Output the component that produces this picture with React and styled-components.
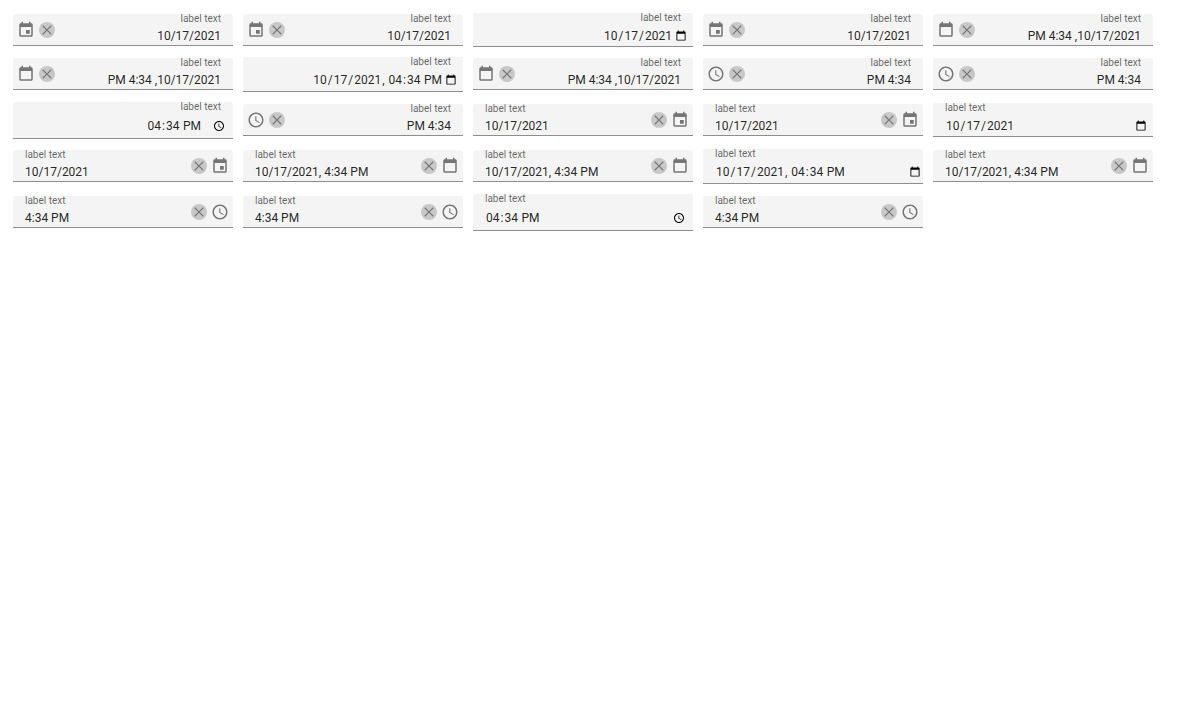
import React, { useId } from "react";
import styled, { createGlobalStyle, css } from "styled-components";

const GlobalStyle = createGlobalStyle`
  *, *::before, *::after { box-sizing: border-box; }
  body {
    margin: 0;
    background: #fff;
    color: rgba(0, 0, 0, 0.87);
    font-family: Roboto, "Liberation Sans", sans-serif;
  }
`;

const Page = styled.main`
  display: flex;
  flex-wrap: wrap;
  align-items: baseline;
  gap: 10px;
  padding: 13px;
`;

const Field = styled.div`
  position: relative;
  display: flex;
  width: 220px;
  overflow: hidden;
  background: #f4f4f4;
  border-bottom: 1px solid #8e8e8e;
  border-radius: 3px 3px 0 0;
`;

const Body = styled.div`
  flex: 1;
  align-self: baseline;
  min-width: 0;
  padding-top: 14px;
`;

/* Floats over the top of the field, so the fields in a row line up on their values. */
const Label = styled.label`
  position: absolute;
  top: 0;
  inset-inline-start: 12px;
  color: rgba(0, 0, 0, 0.6);
  font-size: 10px;
  line-height: 10px;
  white-space: nowrap;
`;

const inputText = css`
  display: block;
  width: 100%;
  height: 16px;
  border: 0;
  outline: 0;
  background: transparent;
  color: inherit;
  font-family: inherit;
  font-size: 12px;
  line-height: 16px;
`;

const TextInput = styled.input`
  ${inputText}
  margin: 0 0 1px;
  padding: 0;
  padding-inline-start: 12px;
`;

const nativeSpace = {
  date: css`
    margin: 1px 0 2px;
    padding: 0 6px 0 12px;
  `,
  "datetime-local": css`
    margin: 1px 0 3px;
    padding: 0 ${(p) => (p.$end ? 6 : 2)}px 0 12px;
  `,
  time: css`
    margin: 2px 0 4px;
    padding: 0 8px 0 12px;
  `,
};

const NativeInput = styled.input`
  ${inputText}
  direction: ltr;
  ${(p) => nativeSpace[p.type]}

  &::-webkit-datetime-edit {
    flex: 1;
    padding: 0;
    text-align: ${(p) => (p.$end ? "right" : "left")};
  }

  &::-webkit-datetime-edit-fields-wrapper {
    padding: 0;
  }

  &::-webkit-calendar-picker-indicator {
    flex: none;
    width: 12px;
    height: 12px;
    padding: 0;
    margin-inline-start: ${(p) => (p.type === "time" ? 11 : 2)}px;
  }
`;

const Actions = styled.div`
  display: flex;
  align-self: center;
  align-items: center;
  gap: 4px;
  padding: 0 4px;
`;

const IconButton = styled.button`
  display: flex;
  align-items: center;
  justify-content: center;
  width: ${(p) => p.$size}px;
  height: ${(p) => p.$size}px;
  padding: 0;
  border: 0;
  border-radius: ${(p) => (p.$filled ? "50%" : "0")};
  background: ${(p) => (p.$filled ? "#c8c8c8" : "transparent")};
  color: #757575;
  cursor: pointer;
`;

const paths = {
  date: "M17 12h-5v5h5v-5zM16 1v2H8V1H6v2H5c-1.11 0-1.99.9-1.99 2L3 19c0 1.1.89 2 2 2h14c1.1 0 2-.9 2-2V5c0-1.1-.9-2-2-2h-1V1h-2zm3 18H5V8h14v11z",
  "datetime-local":
    "M16 1v2H8V1H6v2H5c-1.11 0-1.99.9-1.99 2L3 19c0 1.1.89 2 2 2h14c1.1 0 2-.9 2-2V5c0-1.1-.9-2-2-2h-1V1h-2zm3 18H5V8h14v11z",
  time: "M11.99 2C6.47 2 2 6.48 2 12s4.47 10 9.99 10C17.52 22 22 17.52 22 12S17.52 2 11.99 2zM12 20c-4.42 0-8-3.58-8-8s3.58-8 8-8 8 3.58 8 8-3.58 8-8 8zm.5-13H11v6l5.25 3.15.75-1.23-4.5-2.67z",
  clear:
    "M19 6.2L17.8 5 12 10.8 6.2 5 5 6.2 10.8 12 5 17.8 6.2 19 12 13.2 17.8 19 19 17.8 13.2 12z",
};

function Icon({ name, size }) {
  return (
    <svg width={size} height={size} viewBox="0 0 24 24" fill="currentColor" aria-hidden="true">
      <path d={paths[name]} />
    </svg>
  );
}

const displayValues = {
  date: "10/17/2021",
  "datetime-local": "10/17/2021, 4:34 PM",
  time: "4:34 PM",
};

const nativeValues = {
  date: "2021-10-17",
  "datetime-local": "2021-10-17T16:34",
  time: "16:34",
};

function PickerField({ type, native, dir }) {
  const id = useId();
  return (
    <Field dir={dir}>
      <Label htmlFor={id}>label text</Label>
      <Body>
        {native ? (
          <NativeInput id={id} type={type} $end={dir === "rtl"} defaultValue={nativeValues[type]} />
        ) : (
          <TextInput id={id} type="text" defaultValue={displayValues[type]} />
        )}
      </Body>
      {!native && (
        <Actions>
          <IconButton type="button" $size={16} $filled aria-label="Clear">
            <Icon name="clear" size={16} />
          </IconButton>
          <IconButton type="button" $size={18} aria-label="Open picker">
            <Icon name={type} size={18} />
          </IconButton>
        </Actions>
      )}
    </Field>
  );
}

const directions = ["rtl", "ltr"];
const types = ["date", "datetime-local", "time"];
const variants = [false, false, true, false];

const fields = directions.flatMap((dir) =>
  types.flatMap((type) => variants.map((native) => ({ dir, type, native })))
);

export default function App() {
  return (
    <>
      <GlobalStyle />
      <Page>
        {fields.map((field, index) => (
          <PickerField key={index} {...field} />
        ))}
      </Page>
    </>
  );
}
